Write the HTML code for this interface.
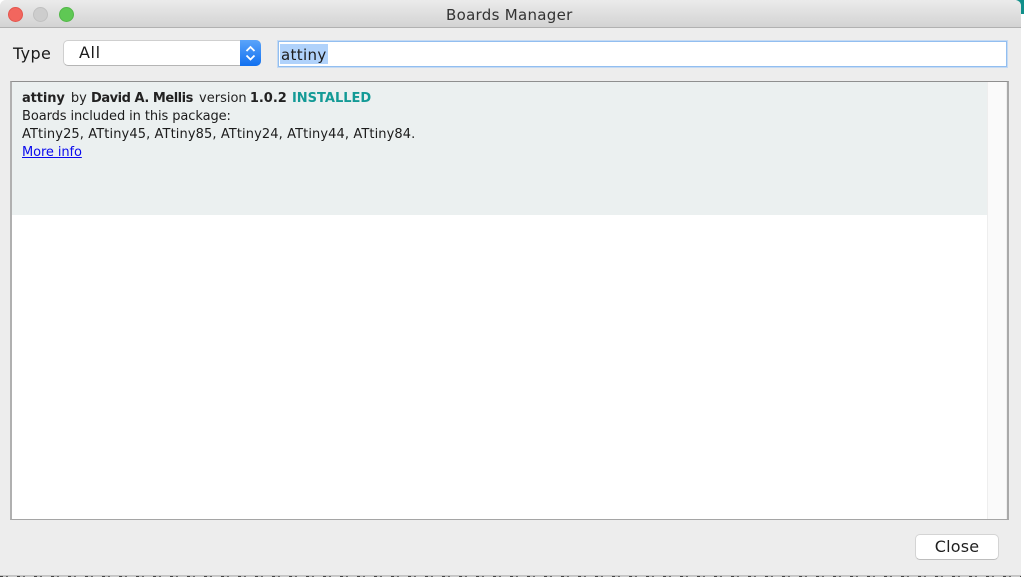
<!DOCTYPE html>
<html><head><meta charset="utf-8"><style>
html,body{margin:0;padding:0;width:1024px;height:577px;overflow:hidden;background:#fff}
body{position:relative;font-family:"DejaVu Sans","Liberation Sans",sans-serif;color:#1c1c1c}
div,a,span.abs{position:absolute;box-sizing:border-box}
.t{white-space:nowrap;font-size:13px;line-height:18px;left:22px}
</style></head><body>
<div style="left:1016px;top:0;width:8px;height:14px;background:#0f8f8a"></div>
<div style="left:0;top:0;width:1021px;height:577px;background:#ededed;border-radius:6px 6px 0 0;overflow:hidden">
<div style="left:0;top:0;width:100%;height:28px;background:linear-gradient(#ebebeb,#d3d3d3);border-bottom:1px solid #b1b1b1"></div>
<div style="left:8px;top:7px;width:15px;height:15px;border-radius:50%;background:#f2665e;border:1px solid #e4554d"></div>
<div style="left:33px;top:7px;width:15px;height:15px;border-radius:50%;background:#cdcdcd;border:1px solid #c0c0c0"></div>
<div style="left:59px;top:7px;width:15px;height:15px;border-radius:50%;background:#5fc854;border:1px solid #52b848"></div>
<div style="left:446px;top:5px;font-size:15px;line-height:20px;letter-spacing:.3px;color:#333;white-space:nowrap">Boards Manager</div>
<div style="left:13px;top:44px;font-size:16px;line-height:20px;letter-spacing:.35px;white-space:nowrap;color:#1a1a1a">Type</div>
<div style="left:63px;top:40px;width:198px;height:26px;background:#fff;border:1px solid #cfcfcf;border-bottom-color:#b5b5b5;border-radius:5px"></div>
<div style="left:79px;top:43px;font-size:16px;line-height:20px;letter-spacing:.6px;color:#1a1a1a">All</div>
<div style="left:240px;top:40px;width:21px;height:26px;background:linear-gradient(#5aa4fa,#1170f0);border-radius:0 5px 5px 0"><svg width="21" height="26" style="display:block"><path d="M6.500 11 10.500 7 14.500 11M6.500 15.500 10.500 19.500 14.500 15.500" fill="none" stroke="#fff" stroke-width="1.800"/></svg></div>
<div style="left:278px;top:41px;width:729px;height:26px;background:#fff;border:1px solid #92bef0;box-shadow:0 0 0 1px #c5daf3"></div>
<div style="left:280px;top:44px;width:48px;height:20px;background:#b0d2fb"></div>
<div style="left:281px;top:46px;font-size:15px;line-height:19px;letter-spacing:.35px;color:#1c1c1c;white-space:nowrap">attiny</div>
<div style="left:10px;top:81px;width:999px;height:439px;background:#fff;border:1px solid #8f8f8f;border-left:2px solid #b0b0b0;border-bottom-color:#a5a5a5;border-right:2px solid #a9a9a9">
<div style="left:0;top:0;width:975px;height:133px;background:#ebf0f0"></div>
<div style="left:975px;top:0;width:20px;height:437px;background:#fafafa;border-left:1px solid #eee;border-right:1px solid #eee"></div>
</div>
<div class="t" style="top:90px;color:#222"><b style="letter-spacing:-.1px;margin-right:2px">attiny</b> by <b style="letter-spacing:-.47px;margin-right:2px">David A. Mellis</b> version <b style="margin-left:-1px;margin-right:1px">1.0.2</b> <b style="color:#139a96">INSTALLED</b></div>
<div class="t" style="top:108px;letter-spacing:-.09px">Boards included in this package:</div>
<div class="t" style="top:126px;letter-spacing:.1px">ATtiny25, ATtiny45, ATtiny85, ATtiny24, ATtiny44, ATtiny84.</div>
<a class="t" style="top:144px;color:#0a0aee;text-decoration:underline;letter-spacing:-.1px">More info</a>
<div style="left:915px;top:534px;width:84px;height:26px;background:#fff;border:1px solid #d4d4d4;border-bottom-color:#bdbdbd;border-radius:5px;text-align:center;font-size:16px;line-height:24px;letter-spacing:.2px;color:#1f1f1f">Close</div>
<div style="left:0;top:575px;width:100%;height:1px;background:#c4c4c4"></div>
<div style="left:0;top:576px;width:100%;height:1px;background:repeating-linear-gradient(90deg,#444 0 3px,#bbb 3px 6px,#666 6px 8px,#ccc 8px 17px)"></div>
</div>
</body></html>
